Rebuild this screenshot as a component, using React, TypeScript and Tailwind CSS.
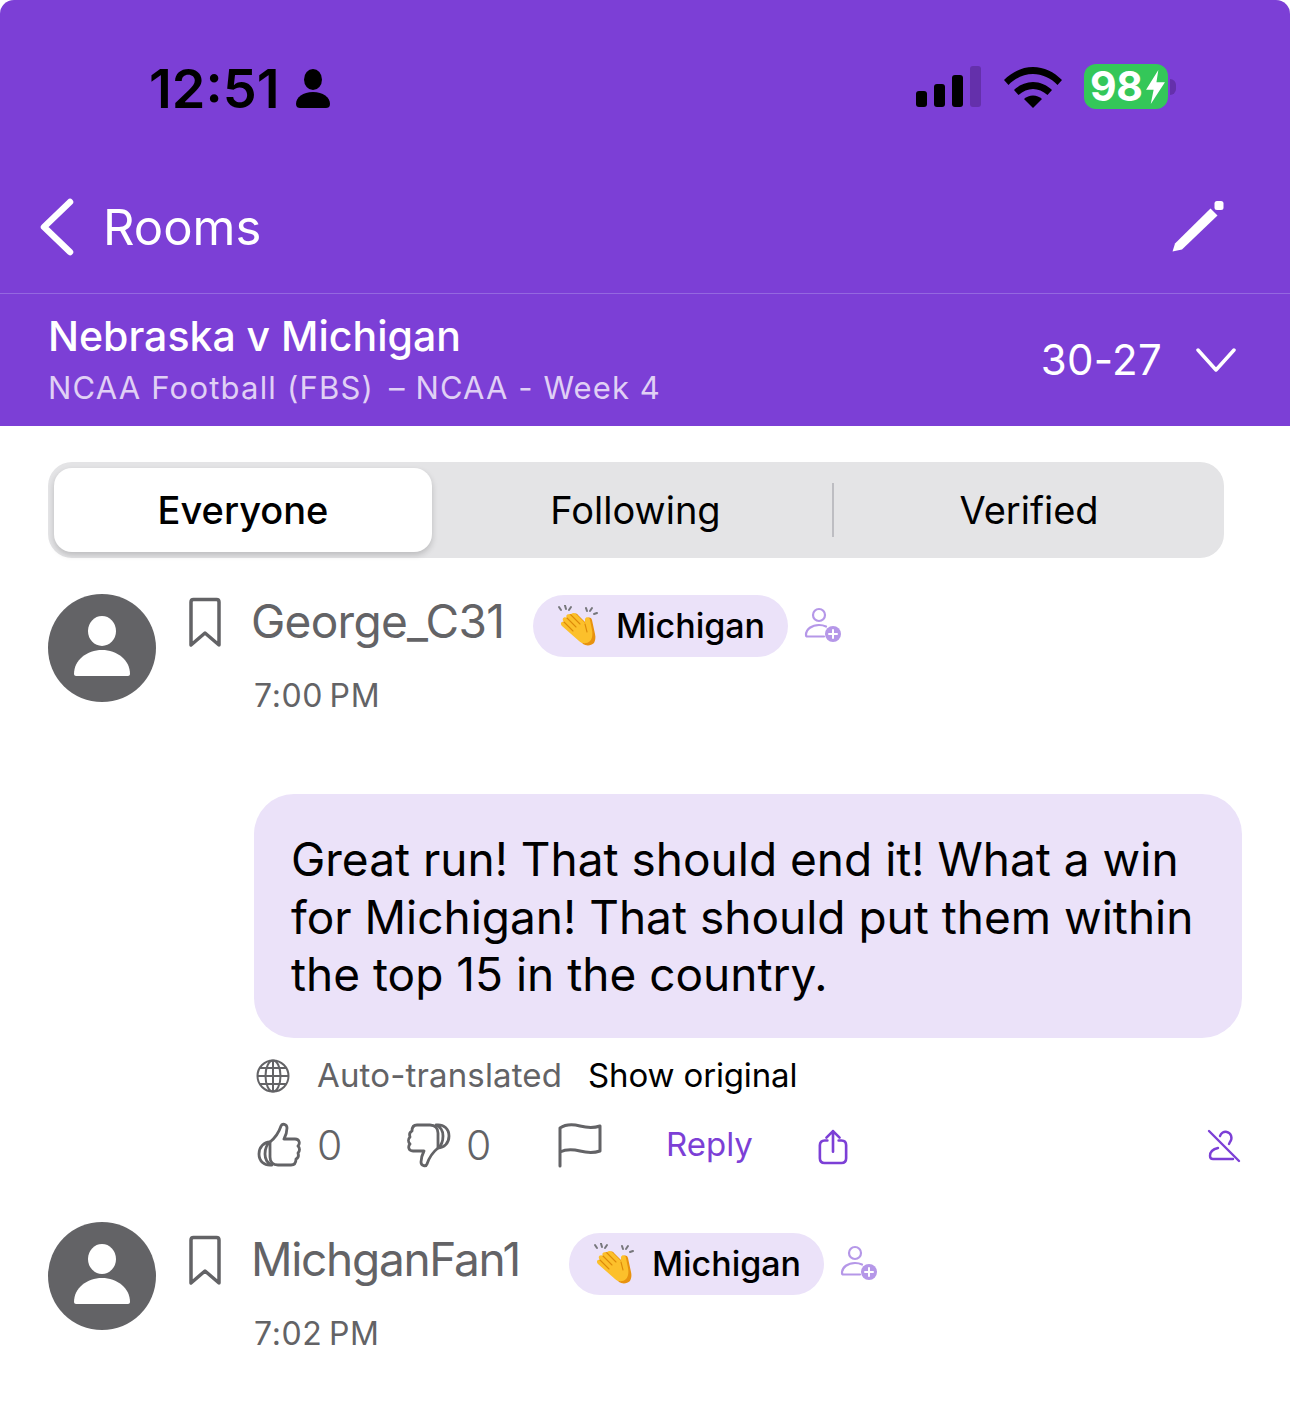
const FONT = "font-['Inter','Liberation_Sans',sans-serif]";

function PersonFill({ className }: { className?: string }) {
  return (
    <svg viewBox="0 0 36 40" className={className} fill="currentColor">
      <ellipse cx="18" cy="10.5" rx="9" ry="10.5" />
      <path d="M1 35c0-7 7-12 17-12s17 5 17 12c0 3-2 4-4 4H5c-2 0-4-1-4-4z" />
    </svg>
  );
}

function StatusIcons() {
  return (
    <div className="flex items-center">
      <div className="flex items-end gap-[7px]">
        <div className="h-[16px] w-[11px] rounded-[3px] bg-black" />
        <div className="h-[23px] w-[11px] rounded-[3px] bg-black" />
        <div className="h-[32px] w-[11px] rounded-[3px] bg-black" />
        <div className="h-[41px] w-[11px] rounded-[3px] bg-[#6430ab]" />
      </div>
      <svg viewBox="0 0 58 42" className="ml-[23px] h-[42px] w-[58px]" fill="black">
        <path d="M0 14C8 6 18 1 29 1s21 5 29 13l-4.500 5C47 12 38 8 29 8S11 12 4.500 19z" />
        <path d="M10 24c5-5 12-8 19-8s14 3 19 8l-4.500 5C39 25 34 23 29 23s-10 2-14.500 6z" />
        <path d="M20 33c2.500-2 5.500-3.500 9-3.500s6.500 1.500 9 3.500l-9 9z" />
      </svg>
      <div className="ml-[22px] flex items-center">
        <div className="flex h-[45px] w-[84px] items-center justify-between rounded-[12px] bg-[#34c759] pl-[6px] pr-[3px] text-[41px] font-bold leading-none text-white">
          <span className="tracking-[-0.5px]">98</span>
          <svg viewBox="0 0 20 36" className="h-[34px] w-[19px]" fill="white">
            <path d="M13 0 0 21h8L5 36l15-23h-9z" />
          </svg>
        </div>
        <div className="ml-[2px] h-[16px] w-[6px] rounded-r-full bg-[#6430ab]" />
      </div>
    </div>
  );
}

function ClapEmoji({ className }: { className?: string }) {
  return (
    <svg viewBox="0 0 42 42" className={className}>
      <g stroke="#77777c" strokeWidth="2" strokeLinecap="round">
        <path d="M2 2l2 3" />
        <path d="M8 0.500 9 4" />
        <path d="M14 2l-2 3" />
        <path d="M29 3l1 3" />
        <path d="M35 3l-2 3" />
        <path d="M40 8l-3 1" />
      </g>
      <path
        d="M9 18c-2-3 0-5 3-4l-1-2c0-3 3-4 5-2 1-2 4-2 5 0l8 8 1-4c1-2 4-2 5 1l3 14c1 4 0 7-1 9-3 3-8 3-11 1z"
        fill="#e8920f"
      />
      <path
        d="M5 21c-2-2-1-5 2-4-3-3 0-6 3-4-2-3 1-5 4-3 0-2 3-3 5-1l9 9 0-4c1-3 5-2 5 1l2 10c1 5 0 9-2 11-3 3-8 3-11 0z"
        fill="#fcc02b"
      />
      <g stroke="#dd8a0a" strokeWidth="1.100" strokeLinecap="round" fill="none">
        <path d="M10 13l9 9" />
        <path d="M7 17l9 9" />
        <path d="M14 10l9 9" />
        <path d="M28 19l2 8" />
      </g>
    </svg>
  );
}

function AddPerson({ className }: { className?: string }) {
  return (
    <svg viewBox="0 0 38 36" className={className} fill="none" stroke="#b597e8" strokeWidth="2.200" strokeLinecap="round">
      <circle cx="15" cy="8" r="6" />
      <path d="M2 28c0-6 6-10 13-10 3 0 5 .5 7 1.500M2 28c0 1 .6 1.500 1.500 1.500H20" />
      <circle cx="29" cy="27" r="8" fill="#b597e8" stroke="none" />
      <path d="M29 23v8M25 27h8" stroke="white" strokeWidth="2" />
    </svg>
  );
}

function Bookmark() {
  return (
    <svg viewBox="0 0 34 52" className="h-[52px] w-[34px]" fill="none" stroke="#636366" strokeWidth="3.500" strokeLinejoin="round">
      <path d="M3 5c0-1.500 1-2.500 2.500-2.500h23C30 2.500 31 3.500 31 5v43L17 36 3 48z" />
    </svg>
  );
}

function Avatar() {
  return (
    <div className="flex h-[108px] w-[108px] shrink-0 items-center justify-center rounded-full bg-[#636366] pb-[4px]">
      <svg viewBox="0 0 56 60" className="h-[60px] w-[56px]" fill="white">
        <ellipse cx="28" cy="15" rx="14" ry="15" />
        <path d="M0 58c0-14 13-24 28-24s28 10 28 24c0 1-1 2-2 2H2c-1 0-2-1-2-2z" />
      </svg>
    </div>
  );
}

interface CommentHeadProps {
  name: string;
  time: string;
  nameClass: string;
  shift?: string;
}

function CommentHead({ name, time, nameClass, shift }: CommentHeadProps) {
  return (
    <div className="flex items-start">
      <Avatar />
      <div className={`flex items-start ${shift ?? ""}`}>
        <div className="ml-[32px] mt-[3px]">
          <Bookmark />
        </div>
        <div className="ml-[29px] pt-[1px]">
          <div className="flex h-[62px] items-center">
            <div className={`${nameClass} mb-[10px] text-[46px] leading-[58px] text-[#636366]`}>{name}</div>
            <div className="flex h-[62px] w-[255px] items-center rounded-full bg-[#ebe2f9] pl-[24px]">
              <ClapEmoji className="h-[42px] w-[42px]" />
              <span className="mb-[2px] ml-[17px] text-[34px] font-medium text-black">Michigan</span>
            </div>
            <AddPerson className="ml-[16px] mt-[-2px] h-[36px] w-[38px]" />
          </div>
          <div className="ml-[3px] mt-[20px] text-[32px] leading-[38px] tracking-[0.6px] text-[#636366] [word-spacing:-3px]">{time}</div>
        </div>
      </div>
    </div>
  );
}

function ActionRow() {
  return (
    <div className="ml-[257px] mt-[23px] flex h-[56px] w-[984px] items-center text-[#636366]">
      <svg viewBox="0 0 44 46" className="h-[46px] w-[44px]" fill="none" stroke="currentColor" strokeWidth="2.800" strokeLinejoin="round" strokeLinecap="round">
        <path d="M13 20c5-4 9-10 11-16 1-3 6-2 6 2 0 5-2 9-3 11h11c5 0 5 5 3 7 2 2 2 5 0 7 1 3 0 5-2 6 0 4-2 6-5 6H21c-5 0-8-3-8-8z" />
        <path d="M13 20c-6 0-11 5-11 12s5 12 13 11c-5-2-7-6-7-11s1-9 5-12z" />
      </svg>
      <span className="ml-[16px] w-[48px] text-[41px] font-light leading-none">0</span>
      <svg viewBox="0 0 44 46" className="ml-[42px] h-[46px] w-[44px]" fill="none" stroke="currentColor" strokeWidth="2.800" strokeLinejoin="round" strokeLinecap="round">
        <path d="M31 26c-5 4-9 10-11 16-1 3-6 2-6-2 0-5 2-9 3-11H6c-5 0-5-5-3-7-2-2-2-5 0-7-1-3 0-5 2-6 0-4 2-6 5-6h13c5 0 8 3 8 8z" />
        <path d="M31 26c6 0 11-5 11-12S37 2 29 3c5 2 7 6 7 11s-1 9-5 12z" />
      </svg>
      <span className="ml-[15px] w-[48px] text-[41px] font-light leading-none">0</span>
      <svg viewBox="0 0 44 46" className="ml-[44px] h-[46px] w-[44px]" fill="none" stroke="currentColor" strokeWidth="3" strokeLinejoin="round" strokeLinecap="round">
        <path d="M2 44V6c6-4 12-4 20-2s14 2 20 0v25c-6 2-12 2-20 0s-14-2-20 1" />
      </svg>
      <span className="ml-[64px] text-[33px] text-[#7c3fd6]">Reply</span>
      <svg viewBox="0 0 32 38" className="ml-[65px] mt-[3px] h-[36px] w-[30px] text-[#7c3fd6]" fill="none" stroke="currentColor" strokeWidth="2.800" strokeLinecap="round" strokeLinejoin="round">
        <path d="M10 12H7c-3 0-5 2-5 5v14c0 3 2 5 5 5h18c3 0 5-2 5-5V17c0-3-2-5-5-5h-3" />
        <path d="M16 24V2M9 9l7-7 7 7" />
      </svg>
      <svg viewBox="0 0 34 34" className="ml-auto mt-[2px] h-[34px] w-[34px] text-[#7c3fd6]" fill="none" stroke="currentColor" strokeWidth="2.400" strokeLinecap="round">
        <path d="M2 2l30 30" />
        <path d="M13 7c1-3 4-5 7-4 4 1 6 6 3 10l-1 2" />
        <path d="M11 19c-5 1-8 4-8 8 0 2 1 3 3 3h20" />
      </svg>
    </div>
  );
}

export default function App() {
  return (
    <div className={`${FONT} min-h-[1425px] w-[1290px] bg-white`}>
      <header className="h-[426px] rounded-t-[14px] bg-[#7c3fd6] text-white">
        <div className="flex h-[175px] items-start justify-between pl-[149px] pr-[114px] pt-[59px]">
          <div className="flex items-center text-black">
            <span className="text-[54px] font-semibold leading-[60px]">12:51</span>
            <PersonFill className="ml-[15px] h-[40px] w-[36px]" />
          </div>
          <div className="pt-[5px]">
            <StatusIcons />
          </div>
        </div>
        <div className="flex h-[119px] items-center justify-between border-b border-[#9468e0] pb-[14px] pl-[40px] pr-[64px]">
          <div className="flex items-center">
            <svg viewBox="0 0 34 58" className="mr-[29px] h-[58px] w-[34px]" fill="none" stroke="white" strokeWidth="6.500" strokeLinecap="round" strokeLinejoin="round">
              <path d="M30 4 4 29l26 25" />
            </svg>
            <span className="text-[49px] leading-none">Rooms</span>
          </div>
          <svg viewBox="0 0 54 54" className="h-[54px] w-[54px]" fill="white">
            <path d="M0.500 51.500 3 43.500 38.500 8.500 45.500 15.500 10 49.500z" />
            <rect x="42.500" y="1" width="9" height="9" rx="2.500" />
          </svg>
        </div>
        <div className="flex h-[132px] items-center justify-between pl-[48px] pr-[54px]">
          <div className="pb-[2px]">
            <div className="text-[41px] font-medium leading-[50px]">Nebraska v Michigan</div>
            <div className="mt-[7px] flex text-[31px] leading-[40px] text-[#e0d0f5]">
              <span className="tracking-[1.2px]">NCAA Football (FBS)</span>
              <span className="ml-[15px] tracking-[1.1px]">– NCAA - Week 4</span>
            </div>
          </div>
          <div className="flex items-center">
            <span className="text-[42px] leading-none tracking-[0.3px]">30-27</span>
            <svg viewBox="0 0 40 24" className="ml-[34px] h-[24px] w-[40px]" fill="none" stroke="white" strokeWidth="3.500" strokeLinecap="round" strokeLinejoin="round">
              <path d="M2 2l18 20L38 2" />
            </svg>
          </div>
        </div>
      </header>

      <div className="ml-[48px] mt-[36px] flex h-[96px] w-[1176px] items-center rounded-[24px] bg-[#e4e4e6] p-[6px] text-[38px] text-black">
        <div className="flex h-[84px] w-[378px] items-center justify-center rounded-[18px] bg-white font-medium shadow-[0_3px_6px_rgba(0,0,0,0.18)]">Everyone</div>
        <div className="flex w-[400px] items-center justify-center pl-[7px]">Following</div>
        <div className="h-[54px] w-[2px] bg-[#bdbdc2]" />
        <div className="flex flex-1 items-center justify-center pl-[6px]">Verified</div>
      </div>

      <div className="ml-[48px] mt-[36px]">
        <CommentHead name="George_C31" time="7:00 PM" nameClass="w-[282px] tracking-[-0.7px]" />
      </div>

      <div className="ml-[254px] mt-[79px] w-[988px] rounded-[40px] bg-[#ebe2f9] pb-[34.500px] pl-[37px] pr-[29px] pt-[37px] text-[46px] leading-[57.500px] text-black">
        Great run! That should end it! What a win for Michigan! That should put them within the top 15 in the country.
      </div>

      <div className="ml-[256px] mt-[20px] flex h-[36px] items-center text-[33px]">
        <svg viewBox="0 0 34 34" className="h-[34px] w-[34px]" fill="none" stroke="#636366" strokeWidth="2">
          <circle cx="17" cy="17" r="15.500" />
          <ellipse cx="17" cy="17" rx="7.500" ry="15.500" />
          <path d="M17 1.500v31M1.500 17h31M4 9h26M4 25h26" />
        </svg>
        <span className="ml-[27px] tracking-[0.15px] text-[#636366]">Auto-translated</span>
        <span className="ml-[26px] tracking-[-0.15px] text-black">Show original</span>
      </div>

      <ActionRow />

      <div className="ml-[48px] mt-[49px]">
        <CommentHead name="MichganFan1" time="7:02 PM" nameClass="w-[318px] tracking-[-1.3px]" shift="pt-[10px]" />
      </div>
    </div>
  );
}
